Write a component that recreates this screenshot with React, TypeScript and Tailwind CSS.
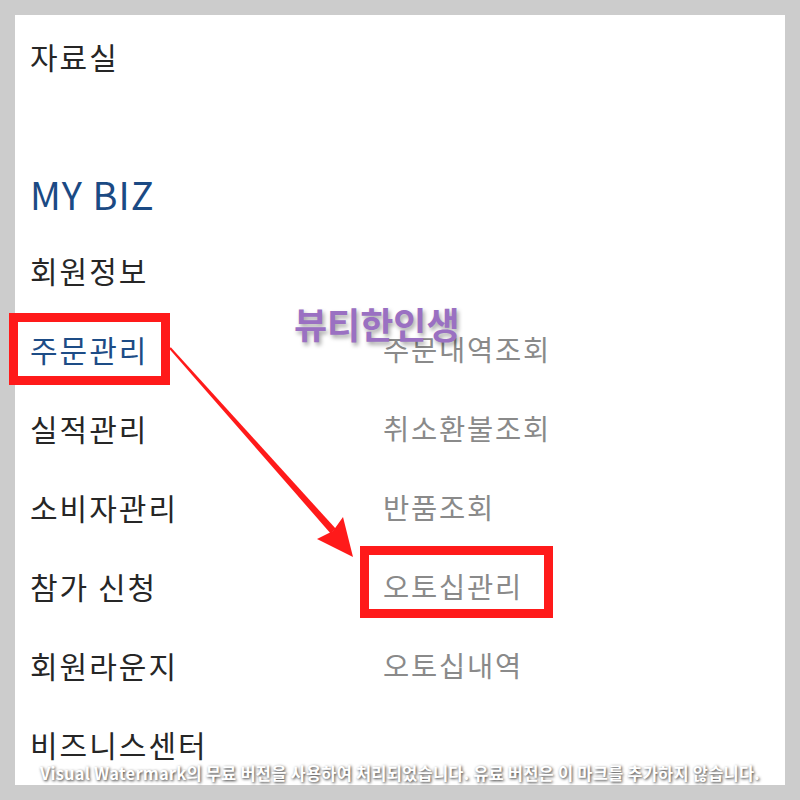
import React from "react";

const left = ["회원정보", "주문관리", "실적관리", "소비자관리", "참가 신청", "회원라운지", "비즈니스센터"];
const right = ["", "주문내역조회", "취소환불조회", "반품조회", "오토십관리", "오토십내역", ""];

export default function App() {
  return (
    <div className="relative w-[800px] h-[800px] bg-[#cccccc] p-[15px] overflow-hidden font-['Noto_Sans_CJK_KR','Noto_Sans',sans-serif]">
      <div className="w-full h-full bg-white pl-[15px] pt-[2px]">
        <div className="h-[79px] flex items-center text-[30px] tracking-[2px] text-[#262626]">자료실</div>
        <div className="mt-[59.5px] h-[75px] flex items-center text-[38px] tracking-[1px] text-[#1b4a84]">MY BIZ</div>
        <div className="grid grid-cols-[353px_1fr]">
          {left.map((l, i) => (
            <React.Fragment key={i}>
              <div
                className={`h-[79px] flex items-center text-[30px] tracking-[2px] ${
                  i === 1 ? "text-[#1d4c86]" : "text-[#262626]"
                }`}
              >
                {l}
              </div>
              <div className="h-[79px] flex items-center text-[28.5px] tracking-[1.8px] text-[#8a8a8a]">{right[i]}</div>
            </React.Fragment>
          ))}
        </div>
      </div>

      {/* purple watermark */}
      <div className="absolute left-[294px] top-[305px] text-[36px] font-bold leading-none tracking-[0px] text-[#9a70c2] [text-shadow:2px_3px_4px_rgba(0,0,0,0.35)]">
        뷰티한인생
      </div>

      {/* red boxes */}
      <div className="absolute left-[9px] top-[313px] w-[161px] h-[72px] border-[9px] border-[#ff1a1a]" />
      <div className="absolute left-[360px] top-[546px] w-[193px] h-[72px] border-[9px] border-[#ff1a1a]" />

      {/* arrow */}
      <svg className="absolute left-0 top-0" width="800" height="800" viewBox="0 0 800 800">
        <polygon
          points="170.8,347.3 169.2,348.7 330.6,533.4 335.8,528.8"
          fill="#ff1a1a"
        />
        <polygon points="353,557 317,539 333,531 343,517" fill="#ff1a1a" />
      </svg>

      {/* bottom watermark */}
      <div className="absolute left-0 right-0 top-[763px] text-center text-[16.5px] font-bold leading-[20px] text-white [text-shadow:1px_1px_3px_rgba(0,0,0,0.8)] tracking-[0.2px]">
        Visual Watermark의 무료 버전을 사용하여 처리되었습니다. 유료 버전은 이 마크를 추가하지 않습니다.
      </div>
    </div>
  );
}
